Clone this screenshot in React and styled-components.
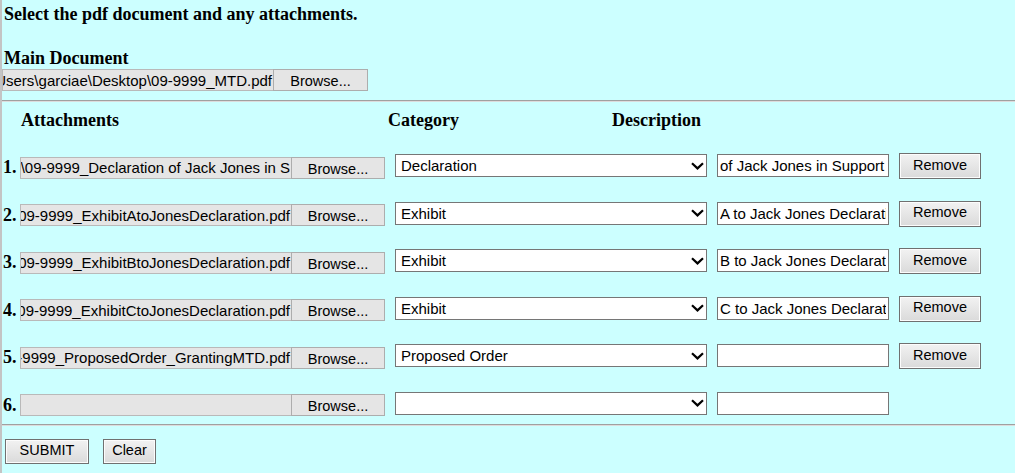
import React from "react";
import styled, { createGlobalStyle } from "styled-components";

const GlobalStyle = createGlobalStyle`
  html, body {
    margin: 0;
    padding: 0;
    background: #ccffff;
  }
  body {
    font-family: "Liberation Serif", "Times New Roman", serif;
    color: #000;
  }
`;

const Page = styled.div`
  min-height: 473px;
  border-left: 2px solid #c4c4c4;
  box-sizing: border-box;
  padding-top: 4px;
`;

const Title = styled.div`
  font-weight: bold;
  font-size: 18px;
  padding-left: 2px;
  margin-bottom: ${(p) => p.$gap || 0}px;
`;

const Rule = styled.hr`
  margin: ${(p) => p.$top}px 0 0 0;
  border: 0;
  border-top: 1px solid #a0a0a0;
  border-bottom: 1px solid #dcdcdc;
  height: 0;
`;

const FileInput = styled.div`
  display: flex;
  width: ${(p) => p.$width}px;
  height: 22px;
`;

const FileName = styled.div`
  flex: 1;
  display: flex;
  justify-content: flex-end;
  align-items: center;
  overflow: hidden;
  white-space: nowrap;
  background: #e5e5e5;
  border: 1px solid #b9b9b9;
  border-right: 0;
  font-family: "Liberation Sans", Arial, sans-serif;
  font-size: 15px;
  padding-right: 1px;

  span {
    flex-shrink: 0;
  }
`;

const BrowseButton = styled.div`
  width: ${(p) => p.$width}px;
  box-sizing: border-box;
  display: flex;
  align-items: center;
  justify-content: center;
  background: #e5e5e5;
  border: 1px solid #adadad;
  font-family: "Liberation Sans", Arial, sans-serif;
  font-size: 14.5px;
  padding-top: 2px;
`;

const HeaderRow = styled.div`
  display: flex;
  margin-top: 8px;
  padding-left: 19px;
  font-weight: bold;
  font-size: 18px;
`;

const HeaderCell = styled.div`
  width: ${(p) => (p.$width ? `${p.$width}px` : "auto")};
`;

const Rows = styled.div`
  display: flex;
  flex-direction: column;
  gap: 21.6px;
  margin-top: 22px;
`;

const Row = styled.div`
  display: flex;
  align-items: center;
  height: 26px;
  padding-left: 1px;
`;

const Num = styled.div`
  width: 17px;
  font-weight: bold;
  font-size: 18px;
  padding-top: 3px;
`;

const FileSlot = styled.div`
  margin-top: 3px;
  margin-right: 10px;
`;

const SelectBox = styled.div`
  width: 312px;
  height: 23px;
  box-sizing: border-box;
  border: 1px solid #767676;
  background: #fff;
  display: flex;
  align-items: center;
  justify-content: space-between;
  padding: 0 2px 0 5px;
  font-family: "Liberation Sans", Arial, sans-serif;
  font-size: 15px;
  margin-top: -1px;
  margin-right: 10px;
`;

const TextBox = styled.input`
  width: 172px;
  height: 23px;
  box-sizing: border-box;
  border: 1px solid #767676;
  background: #fff;
  padding: 0 2px;
  font-family: "Liberation Sans", Arial, sans-serif;
  font-size: 15px;
  color: #000;
  margin: -1px 10px 0 0;
  outline: none;
`;

const Button = styled.button`
  height: ${(p) => p.$height || 26}px;
  width: ${(p) => p.$width}px;
  box-sizing: border-box;
  border: 1px solid #707070;
  box-shadow: inset 0 0 0 1px #fcfcfc;
  background: linear-gradient(#f2f2f2, #e6e6e6 50%, #dadada);
  font-family: "Liberation Sans", Arial, sans-serif;
  font-size: 14.5px;
  color: #000;
  padding: 0 0 3px 0;
  margin: 0;
`;

const Footer = styled.div`
  display: flex;
  gap: 14px;
  margin-top: 13px;
  padding-left: 3px;
`;

const Chevron = () => (
  <svg width="13" height="8" viewBox="0 0 13 8">
    <path d="M1 1.2 L6.5 6.4 L12 1.2" fill="none" stroke="#000" strokeWidth="2.2" />
  </svg>
);

const rows = [
  { file: "C:\\Users\\garciae\\Desktop\\09-9999_Declaration of Jack Jones in S", cat: "Declaration", desc: "of Jack Jones in Support" },
  { file: "C:\\Users\\garciae\\Desktop\\09-9999_ExhibitAtoJonesDeclaration.pdf", cat: "Exhibit", desc: "A to Jack Jones Declaration" },
  { file: "C:\\Users\\garciae\\Desktop\\09-9999_ExhibitBtoJonesDeclaration.pdf", cat: "Exhibit", desc: "B to Jack Jones Declaration" },
  { file: "C:\\Users\\garciae\\Desktop\\09-9999_ExhibitCtoJonesDeclaration.pdf", cat: "Exhibit", desc: "C to Jack Jones Declaration" },
  { file: "C:\\Users\\garciae\\Desktop\\09-9999_ProposedOrder_GrantingMTD.pdf", cat: "Proposed Order", desc: "" },
  { file: "", cat: "", desc: "", last: true },
];

export default function App() {
  return (
    <Page>
      <GlobalStyle />
      <Title $gap={23}>Select the pdf document and any attachments.</Title>
      <Title>Main Document</Title>
      <FileInput $width={366}>
        <FileName>
          <span>C:\Users\garciae\Desktop\09-9999_MTD.pdf</span>
        </FileName>
        <BrowseButton $width={95}>Browse...</BrowseButton>
      </FileInput>
      <Rule $top={9} />
      <HeaderRow>
        <HeaderCell $width={367}>Attachments</HeaderCell>
        <HeaderCell $width={224}>Category</HeaderCell>
        <HeaderCell>Description</HeaderCell>
      </HeaderRow>
      <Rows>
        {rows.map((r, i) => (
          <Row key={i}>
            <Num>{i + 1}.</Num>
            <FileSlot>
              <FileInput $width={365}>
                <FileName>
                  <span>{r.file}</span>
                </FileName>
                <BrowseButton $width={94}>Browse...</BrowseButton>
              </FileInput>
            </FileSlot>
            <SelectBox>
              <span>{r.cat}</span>
              <Chevron />
            </SelectBox>
            <TextBox readOnly defaultValue={r.desc} />
            {!r.last && <Button $width={82}>Remove</Button>}
          </Row>
        ))}
      </Rows>
      <Rule $top={7} />
      <Footer>
        <Button $width={84} $height={25}>SUBMIT</Button>
        <Button $width={53} $height={25}>Clear</Button>
      </Footer>
    </Page>
  );
}
